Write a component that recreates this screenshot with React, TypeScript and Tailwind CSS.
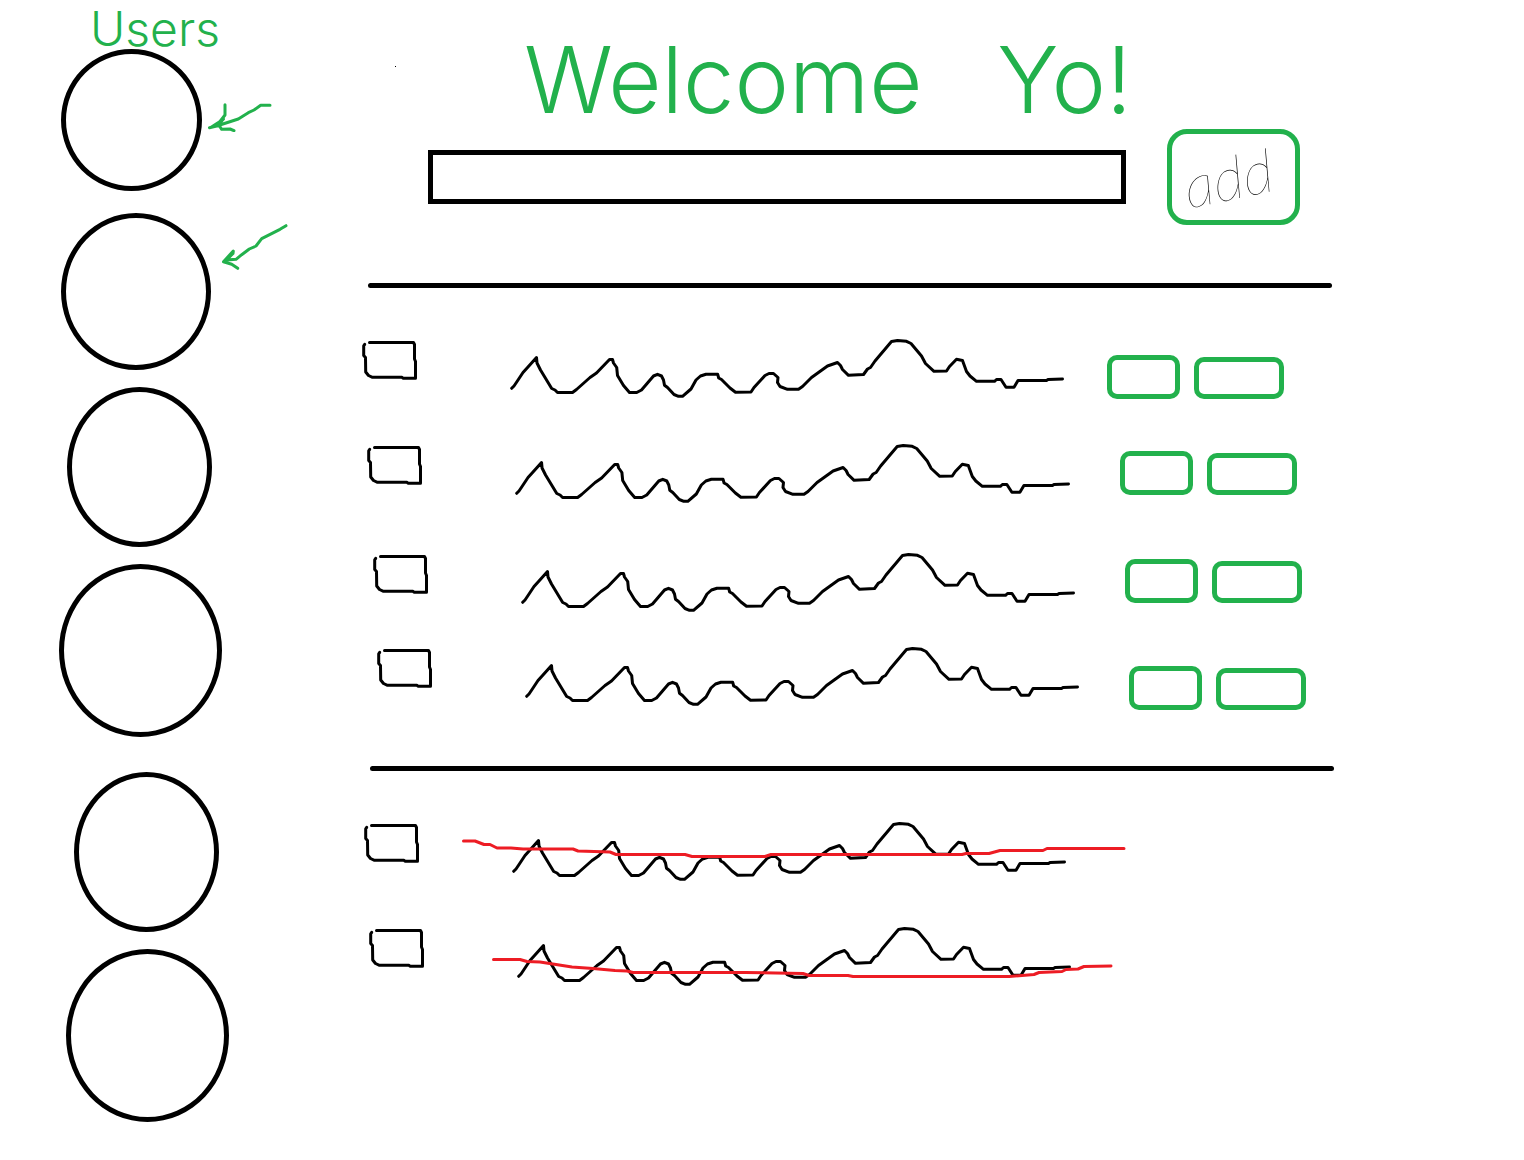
import React from "react";

const users = [
  { id: 1, size: "h-[142px] w-[141px]", place: "pl-[3px]" },
  { id: 2, size: "h-[157px] w-[150px]", place: "mt-[22px] pl-[3px]" },
  { id: 3, size: "h-[160px] w-[145px]", place: "mt-[17px] pl-[9px]" },
  { id: 4, size: "h-[173px] w-[163px]", place: "mt-[17px] pl-px" },
  { id: 5, size: "h-[160px] w-[145px]", place: "mt-[35px] pl-4" },
  { id: 6, size: "h-[173px] w-[163px]", place: "mt-[17px] pl-2" },
];

const openTasks = [
  { id: 1, row: "pr-[50px]", actions: "ml-[41px] pt-[17px]" },
  { id: 2, row: "mt-[41px] pl-[5px] pr-[37px]", actions: "ml-12 pt-2" },
  { id: 3, row: "mt-[45px] pl-[11px] pr-8", actions: "ml-12 pt-[7px]" },
  { id: 4, row: "mt-[30px] pl-[15px] pr-7", actions: "ml-12 pt-5" },
];

const doneTasks = [
  {
    id: 5,
    row: "pl-[2px] pr-[266px]",
    shift: "translate(-2 -483)",
    strike:
      "M463.5 841H475L484 844.5H490L497 848H511L523 849H573L578 851L610 852L616 854.5H685L692 856.5H765L771 854.5H962L966 853.5H989L1000 850.5H1043L1047 848.5H1124",
  },
  {
    id: 6,
    row: "mt-[41px] pl-[7px] pr-[261px]",
    shift: "translate(-7 -588)",
    strike:
      "M493.5 959.5H520L527 961.5L540 962L572 967L593 968.5L615 970.5L627 971L633 972.5H745L803 973.5L809 975.5H848L853 976.5H1009L1034 974.5L1039 972.5L1062 971.5L1066 969.5L1078 969L1084 966.5L1111 966",
  },
];

const WAVE =
  "M511.7 388.3L514 386L516.7 382L523 372.5L528 367L536.5 357.5L537 363L540.5 370L551.7 388.5L555 390L557.5 392.5H572.5L576.5 389.5L590 377.5L596.5 373L609.5 359.5H612.5L613.5 363L616.7 367.5L617.5 375.5L623.5 385.5L629.5 392.5H636.7L641.5 390L653.5 376L657.5 374.3L661.5 376L663.5 380L664.5 385.3L667.5 387.5L674 394.5L678.5 396.3H682.5L691 389L696 380L700.5 376L706 374.3H717.7L718.7 378L721.5 379.5L730 388L735.5 392.3L751 392L754 387.5L765 375.5L769 373.5H773.5L778 377.5L777.5 382.5L780 386.5L787.5 389.3H798.5L802.5 386.5L811.5 377.5L827.5 366L837.5 362.5L840.5 365.5L842.5 369.5L848.5 375.3L863.5 374.5L867.5 369L870.5 367.5L875 361L891.5 341.5L897.5 340.5L906.5 341.3L911 343.5L921.5 356L925.5 363.5L934 371.3L946.5 371L949.5 366.5L956.5 359.3L962.5 360.5L966.5 371.5L970 376L976.5 381.3H994.5L996.5 379.5H1001L1006 387.3H1014L1018 380.5H1046.5L1048 379.5L1062.5 379";

function Arrow({ className, viewBox, d }: { className: string; viewBox: string; d: string }) {
  return (
    <svg
      aria-hidden="true"
      className={className}
      viewBox={viewBox}
      fill="none"
      stroke="#22b14c"
      strokeWidth="3"
      strokeLinecap="round"
      strokeLinejoin="round"
    >
      <path d={d} />
    </svg>
  );
}

function Check({ id }: { id: number }) {
  return (
    <label className="relative block h-11 w-14 shrink-0 cursor-pointer">
      <input
        type="checkbox"
        aria-label={`Task ${id}`}
        className="peer absolute inset-0 h-full w-full cursor-pointer appearance-none"
      />
      <svg
        aria-hidden="true"
        className="h-11 w-14 peer-checked:[&_.tick]:opacity-100"
        viewBox="362 338 56 44"
        fill="none"
        stroke="#000"
        strokeWidth="3"
        strokeLinecap="round"
        strokeLinejoin="round"
      >
        <path d="M369.5 342.5H413.5L414.5 344.5V359L415.5 361.5V378.3H403L402 377.3H372.5L368.5 375.5L365.7 372L365.5 357.5L363.7 355.5V345.8L364.7 344.3" />
        <path className="tick opacity-0" d="M376 360L386 369L404 350" />
      </svg>
    </label>
  );
}

function Wave({ strike, shift }: { strike?: string; shift?: string }) {
  return (
    <svg
      aria-hidden="true"
      className="ml-[92px] h-16 min-w-0 flex-1 overflow-visible"
      viewBox="510 338 556 64"
      preserveAspectRatio="none"
      fill="none"
      strokeWidth="3"
      strokeLinecap="round"
      strokeLinejoin="round"
    >
      <path d={WAVE} stroke="#000" vectorEffect="non-scaling-stroke" />
      {strike && (
        <path d={strike} transform={shift} stroke="#ed1c24" vectorEffect="non-scaling-stroke" />
      )}
    </svg>
  );
}

export default function App() {
  return (
    <div className="flex min-h-screen bg-white pb-9 font-['Inter',sans-serif] text-black">
      <aside className="w-[362px] shrink-0 pl-[58px]">
        <h2 className="h-[49px] pl-8 text-5xl leading-[58px] font-light text-[#22b14c]">Users</h2>
        <ul>
          {users.map((u) => (
            <li key={u.id} className={`flex items-start ${u.place}`}>
              <button
                type="button"
                aria-label={`User ${u.id}`}
                className={`shrink-0 cursor-pointer rounded-[50%] border-[5px] border-black ${u.size}`}
              />
              {u.id === 1 && (
                <Arrow
                  className="mt-[51px] ml-[5px] h-8 w-[66px]"
                  viewBox="207 100 66 32"
                  d="M209.5 127.7L216.7 126L238.3 119L248.3 112.7L254 110L260.7 105.3H270M225 104.7V115L220 121.5L211.5 127M223.5 119L218.5 124.5L221.7 129.3L230 129L234 130.7"
                />
              )}
              {u.id === 2 && (
                <Arrow
                  className="mt-[9px] ml-[9px] h-12 w-[68px]"
                  viewBox="220 222 68 48"
                  d="M286 225.7L280 229.3L261.7 238.7L256 246L249.3 249L241.7 254.7L236 259.3L226.7 260M237.7 268.3L231.7 264.3L223.5 261.7L233.3 251L233 253.5L226.5 260"
                />
              )}
            </li>
          ))}
        </ul>
      </aside>

      <main className="min-w-0 flex-1 pr-[190px]">
        <div className="flex h-[129px] items-start pl-[33px]">
          <span aria-hidden="true" className="mt-[66px] h-px w-px bg-black" />
          <h1 className="mr-[202px] ml-[128px] flex flex-1 justify-between pt-8 text-[92px] leading-[96px] font-light whitespace-nowrap text-[#22b14c]">
            <span>Welcome</span> <span>Yo!</span>
          </h1>
        </div>

        <form className="flex items-center pr-[34px] pl-[66px]" onSubmit={(e) => e.preventDefault()}>
          <input
            type="text"
            aria-label="New task"
            className="h-[54px] min-w-0 flex-1 border-[5px] border-black px-4 text-2xl outline-none"
          />
          <button
            type="submit"
            className="ml-[41px] h-24 w-[133px] shrink-0 cursor-pointer rounded-[20px] border-[5px] border-[#22b14c] pr-3 font-['Lato',sans-serif] text-6xl font-thin italic"
          >
            <span className="inline-block -rotate-12">add</span>
          </button>
        </form>

        <hr className="mt-[58px] mr-[2px] ml-[6px] h-[5px] rounded-full border-0 bg-black" />

        <ul className="mt-[50px]">
          {openTasks.map((t) => (
            <li key={t.id} className={`flex h-16 items-start ${t.row}`}>
              <Check id={t.id} />
              <Wave />
              <div className={`flex shrink-0 items-end gap-[14px] ${t.actions}`}>
                <button
                  type="button"
                  aria-label={`Edit task ${t.id}`}
                  className="h-11 w-[73px] cursor-pointer rounded-[10px] border-[5px] border-[#22b14c]"
                />
                <button
                  type="button"
                  aria-label={`Delete task ${t.id}`}
                  className="h-[42px] w-[90px] cursor-pointer rounded-[10px] border-[5px] border-[#22b14c]"
                />
              </div>
            </li>
          ))}
        </ul>

        <hr className="mt-14 ml-2 h-[5px] rounded-full border-0 bg-black" />

        <ul className="mt-[50px]">
          {doneTasks.map((t) => (
            <li key={t.id} className={`flex h-16 items-start ${t.row}`}>
              <Check id={t.id} />
              <Wave strike={t.strike} shift={t.shift} />
            </li>
          ))}
        </ul>
      </main>
    </div>
  );
}
